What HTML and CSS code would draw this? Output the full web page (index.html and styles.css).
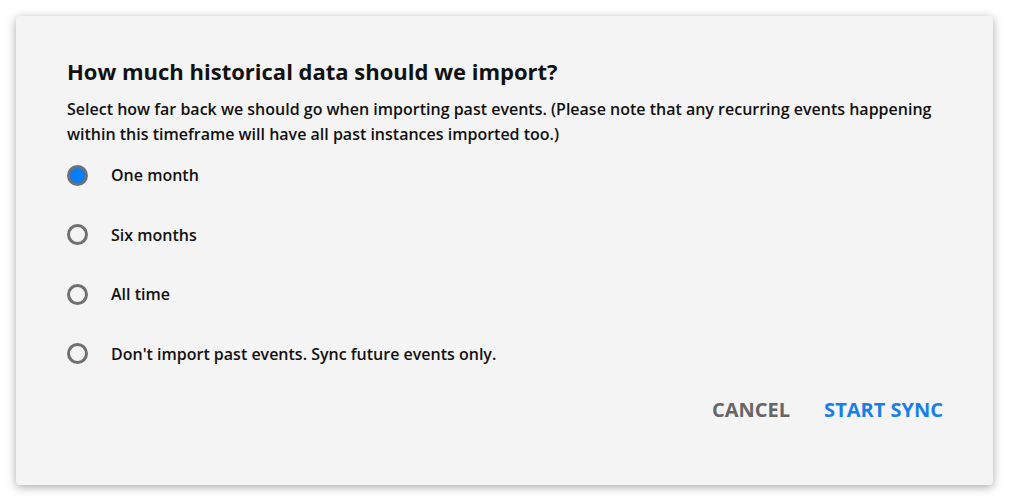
FILE: index.html
```html
<!DOCTYPE html>
<html lang="en">
<head>
<meta charset="utf-8">
<title>Import historical data</title>
<link rel="stylesheet" href="styles.css">
</head>
<body>
<div class="dialog">
  <h1 class="title">How much historical data should we import?</h1>
  <p class="desc">Select how far back we should go when importing past events. (Please note that any recurring events happening within this timeframe will have all past instances imported too.)</p>
  <div class="options">
    <label class="option"><span class="radio checked"></span><span class="label">One month</span></label>
    <label class="option"><span class="radio"></span><span class="label">Six months</span></label>
    <label class="option"><span class="radio"></span><span class="label">All time</span></label>
    <label class="option"><span class="radio"></span><span class="label">Don't import past events. Sync future events only.</span></label>
  </div>
  <div class="actions">
    <span class="btn btn-cancel">CANCEL</span>
    <span class="btn btn-primary">START SYNC</span>
  </div>
</div>
</body>
</html>
```
FILE: styles.css
```css
html, body {
  margin: 0;
  padding: 0;
  background: #ffffff;
}
body {
  padding: 16px;
  font-family: "Open Sans", "Noto Sans", sans-serif;
  color: #111111;
}
.dialog {
  width: 977px;
  box-sizing: border-box;
  background: #f4f4f4;
  border-radius: 4px;
  box-shadow: 0 2px 10px rgba(0, 0, 0, 0.35);
  padding: 40px 50px 63px 51px;
}
.title {
  margin: 0;
  font-size: 22px;
  line-height: 30px;
  font-weight: 700;
  color: #111111;
}
.desc {
  margin: 11px 0 0 0;
  font-size: 16px;
  line-height: 25px;
  font-weight: 600;
  color: #111111;
}
.options {
  display: flex;
  flex-direction: column;
  gap: 35.5px;
  margin-top: 16px;
}
.option {
  display: flex;
  align-items: center;
  height: 24px;
}
.radio {
  width: 21px;
  height: 21px;
  box-sizing: border-box;
  border: 3px solid #707070;
  border-radius: 50%;
  margin-right: 23px;
  flex: none;
}
.radio.checked {
  background: #0a7cf5;
}
.label {
  font-size: 16px;
  line-height: 24px;
  font-weight: 600;
  color: #111111;
}
.actions {
  display: flex;
  justify-content: flex-end;
  gap: 34px;
  margin-top: 32.5px;
}
.btn {
  font-size: 20px;
  line-height: 24px;
  font-weight: 700;
}
.btn-cancel {
  color: #666666;
}
.btn-primary {
  color: #1a7ee8;
}
```
